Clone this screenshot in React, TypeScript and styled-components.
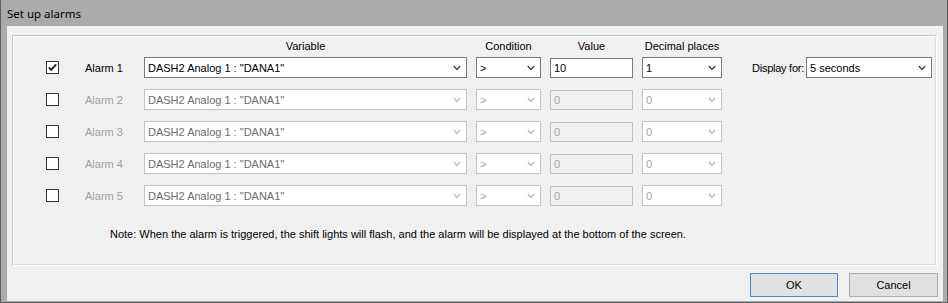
import React from "react";
import styled, { createGlobalStyle, css } from "styled-components";

const GlobalStyle = createGlobalStyle`
  html, body { margin: 0; padding: 0; background: #ababab; }
  * { box-sizing: border-box; }
`;

const UI_FONT = `"Liberation Sans", Arial, sans-serif`;

const Window = styled.div`
  width: 948px;
  height: 303px;
  display: flex;
  flex-direction: column;
  background: #ababab;
  border-left: 1px solid #5e5e5e;
  border-right: 1px solid #5e5e5e;
  border-bottom: 1px solid #5e5e5e;
  font-family: ${UI_FONT};
  font-size: 11px;
  color: #000;
`;

const TitleBar = styled.div`
  height: 26px;
  flex: none;
  display: flex;
  align-items: center;
  padding-left: 6px;
  font-family: "Noto Sans", "Open Sans", sans-serif;
  font-size: 11.5px;
  color: #000;
`;

const Client = styled.div`
  flex: 1;
  margin: 0 4px 3px 6px;
  background: #f0f0f0;
  display: flex;
  flex-direction: column;
  padding: 9px 5px 4px 5px;
`;

const Panel = styled.div`
  height: 231px;
  margin-right: 1px;
  border-top: 1px solid #c4c4c4;
  border-left: 1px solid #c4c4c4;
  border-right: 1px solid #ffffff;
  border-bottom: 1px solid #ffffff;
  box-shadow: inset 1px 1px 0 #ffffff, inset -1px -1px 0 #dcdcdc;
  padding: 4px 0 0 33px;
  display: flex;
  flex-direction: column;
`;

const columns = css`
  display: grid;
  grid-template-columns: 30px 50px 323px 65px 83px 80px 1fr;
  column-gap: 9px;
  align-items: center;
`;

const HeaderRow = styled.div`
  ${columns};
  height: 17px;
  align-items: start;
  line-height: 13px;
`;

const HeaderCell = styled.div<{ $col: number }>`
  grid-column: ${(p) => p.$col};
  text-align: center;
  white-space: nowrap;
`;

const Rows = styled.div`
  display: flex;
  flex-direction: column;
  gap: 11px;
`;

const AlarmRow = styled.div`
  ${columns};
  height: 21px;
`;

const CheckBox = styled.span`
  width: 13px;
  height: 13px;
  border: 1px solid #333333;
  background: #ffffff;
  display: flex;
  align-items: center;
  justify-content: center;
`;

const AlarmLabel = styled.span<{ $disabled?: boolean }>`
  color: ${(p) => (p.$disabled ? "#a0a0a0" : "#000")};
  white-space: nowrap;
`;

const Combo = styled.div<{ $disabled?: boolean }>`
  height: 21px;
  background: #ffffff;
  border: 1px solid ${(p) => (p.$disabled ? "#c4c4c4" : "#7a7a7a")};
  color: ${(p) => (p.$disabled ? "#6d6d6d" : "#000")};
  display: flex;
  align-items: center;
  padding: 0 5px 0 3px;
  white-space: nowrap;
  overflow: hidden;
`;

const ComboText = styled.span<{ $light?: boolean }>`
  flex: 1;
  color: ${(p) => (p.$light ? "#a0a0a0" : "inherit")};
`;

const TextBox = styled.div<{ $disabled?: boolean }>`
  height: 20px;
  align-self: end;
  background: ${(p) => (p.$disabled ? "#f0f0f0" : "#ffffff")};
  border: 1px solid ${(p) => (p.$disabled ? "#bfbfbf" : "#7a7a7a")};
  color: ${(p) => (p.$disabled ? "#a0a0a0" : "#000")};
  display: flex;
  align-items: center;
  padding-left: 3px;
`;

const DisplayCell = styled.div`
  display: flex;
  align-items: center;
  padding-left: 21px;
  gap: 2px;
`;

const DisplayLabel = styled.span`
  width: 52px;
  white-space: nowrap;
  letter-spacing: -0.25px;
`;

const DisplayCombo = styled(Combo)`
  width: 126px;
`;

const Note = styled.div`
  margin-top: 22px;
  padding-left: 64px;
  line-height: 13px;
  white-space: nowrap;
`;

const ButtonBar = styled.div`
  display: flex;
  justify-content: flex-end;
  gap: 11px;
  margin-top: 7px;
`;

const Button = styled.div<{ $default?: boolean; $w: number }>`
  width: ${(p) => p.$w}px;
  height: 24px;
  background: #e1e1e1;
  border: 1px solid ${(p) => (p.$default ? "#4c8ac6" : "#adadad")};
  display: flex;
  align-items: center;
  justify-content: center;
  font-size: 11px;
`;

const Chevron = ({ disabled }: { disabled?: boolean }) => (
  <svg width="8" height="6" viewBox="0 0 8 6" style={{ flex: "none" }}>
    <polyline
      points="0.8,1 4,4.4 7.2,1"
      fill="none"
      stroke={disabled ? "#bcbcbc" : "#404040"}
      strokeWidth="1.4"
    />
  </svg>
);

const CheckMark = () => (
  <svg width="11" height="11" viewBox="0 0 11 11">
    <polyline points="1.8,5.4 4.2,7.9 9.2,2.4" fill="none" stroke="#222" strokeWidth="1.8" />
  </svg>
);

const rows = [1, 2, 3, 4, 5];

export default function App() {
  return (
    <>
      <GlobalStyle />
      <Window>
        <TitleBar>Set up alarms</TitleBar>
        <Client>
          <Panel>
            <HeaderRow>
              <HeaderCell $col={3}>Variable</HeaderCell>
              <HeaderCell $col={4}>Condition</HeaderCell>
              <HeaderCell $col={5}>Value</HeaderCell>
              <HeaderCell $col={6}>Decimal places</HeaderCell>
            </HeaderRow>
            <Rows>
              {rows.map((n) => {
                const enabled = n === 1;
                return (
                  <AlarmRow key={n}>
                    <CheckBox>{enabled && <CheckMark />}</CheckBox>
                    <AlarmLabel $disabled={!enabled}>Alarm {n}</AlarmLabel>
                    <Combo $disabled={!enabled}>
                      <ComboText>DASH2 Analog 1 : "DANA1"</ComboText>
                      <Chevron disabled={!enabled} />
                    </Combo>
                    <Combo $disabled={!enabled}>
                      <ComboText $light={!enabled}>&gt;</ComboText>
                      <Chevron disabled={!enabled} />
                    </Combo>
                    <TextBox $disabled={!enabled}>{enabled ? "10" : "0"}</TextBox>
                    <Combo $disabled={!enabled}>
                      <ComboText $light={!enabled}>{enabled ? "1" : "0"}</ComboText>
                      <Chevron disabled={!enabled} />
                    </Combo>
                    {enabled ? (
                      <DisplayCell>
                        <DisplayLabel>Display for:</DisplayLabel>
                        <DisplayCombo>
                          <ComboText>5 seconds</ComboText>
                          <Chevron />
                        </DisplayCombo>
                      </DisplayCell>
                    ) : (
                      <span />
                    )}
                  </AlarmRow>
                );
              })}
            </Rows>
            <Note>
              Note: When the alarm is triggered, the shift lights will flash, and the alarm will be displayed at the bottom of the screen.
            </Note>
          </Panel>
          <ButtonBar>
            <Button $default $w={88}>OK</Button>
            <Button $w={89}>Cancel</Button>
          </ButtonBar>
        </Client>
      </Window>
    </>
  );
}
